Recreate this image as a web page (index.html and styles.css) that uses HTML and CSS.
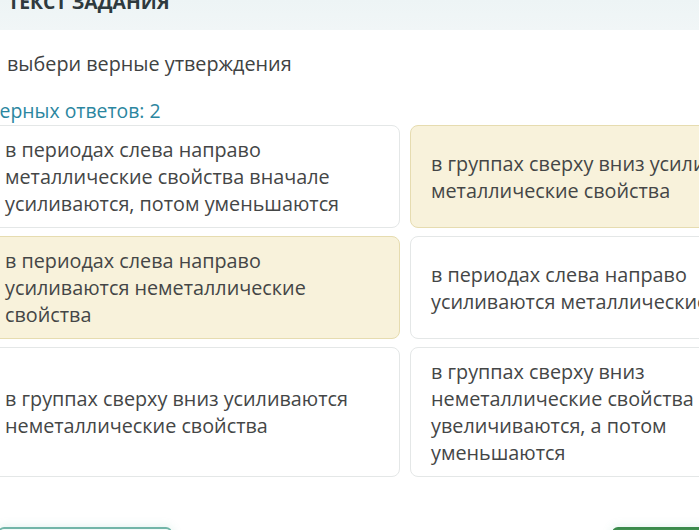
FILE: index.html
```html
<!DOCTYPE html>
<html lang="ru">
<head>
<meta charset="utf-8">
<title>Текст задания</title>
<link rel="stylesheet" href="styles.css">
</head>
<body>
<div class="page">
  <header class="task-header">
    <h1 class="task-title">ТЕКСТ ЗАДАНИЯ</h1>
  </header>
  <main class="task-body">
    <p class="question">выбери верные утверждения</p>
    <p class="count">Верных ответов: 2</p>
    <div class="answers">
      <div class="card"><span>в периодах слева направо металлические свойства вначале усиливаются, потом уменьшаются</span></div>
      <div class="card selected"><span>в группах сверху вниз усиливаются металлические свойства</span></div>
      <div class="card selected"><span>в периодах слева направо усиливаются неметаллические свойства</span></div>
      <div class="card"><span>в периодах слева направо усиливаются металлические свойства</span></div>
      <div class="card"><span>в группах сверху вниз усиливаются неметаллические свойства</span></div>
      <div class="card"><span>в группах сверху вниз неметаллические свойства увеличиваются, а потом уменьшаются</span></div>
    </div>
    <div class="actions">
      <button class="btn btn-outline">Сбросить</button>
      <button class="btn btn-primary">Далее</button>
    </div>
  </main>
</div>
</body>
</html>
```
FILE: styles.css
```css
html, body {
  margin: 0;
  padding: 0;
  background: #ffffff;
  overflow: hidden;
}
body {
  width: 699px;
  height: 530px;
  font-family: "Open Sans", "Noto Sans", sans-serif;
  color: #3f4141;
}
.page {
  width: 699px;
  height: 530px;
  overflow: hidden;
}
.task-header {
  height: 30px;
  background: linear-gradient(#edf4f5, #f1f6f7);
  overflow: hidden;
}
.task-title {
  margin: -10px 0 0 8px;
  font-size: 19.4px;
  line-height: 24px;
  font-weight: 700;
  color: #2e3a3e;
}
.task-body {
  margin-left: -16px;
}
.question {
  margin: 21px 0 0 23px;
  font-size: 19.8px;
  line-height: 26px;
  color: #404242;
}
.count {
  margin: 21px 0 0 3px;
  font-size: 19.4px;
  line-height: 26px;
  color: #2b86a0;
}
.answers {
  margin-top: 1px;
  display: grid;
  grid-template-columns: 416px 416px;
  column-gap: 10px;
  row-gap: 8px;
}
.card {
  display: flex;
  align-items: center;
  padding: 10px 22px 10px 20px;
  border: 1px solid #e4e7e7;
  border-radius: 8px;
  background: #ffffff;
  font-size: 19.8px;
  line-height: 27px;
  color: #444646;
}
.card.selected {
  background: #f8f2db;
  border-color: #e6dcb0;
}
.actions {
  margin-top: 50px;
  display: flex;
  justify-content: space-between;
  width: 742px;
  padding-left: 16px;
}
.btn {
  height: 44px;
  border-radius: 6px;
  font-family: inherit;
  font-size: 18px;
  box-shadow: 0 0 10px rgba(120, 200, 180, 0.25);
}
.btn-outline {
  width: 174px;
  margin-left: -2px;
  border: 2px solid #72b5a8;
  background: #f3fbf9;
  color: #2f7f73;
}
.btn-primary {
  width: 130px;
  border: 2px solid #3b8a4c;
  background: #3f9150;
  color: #ffffff;
}
```
